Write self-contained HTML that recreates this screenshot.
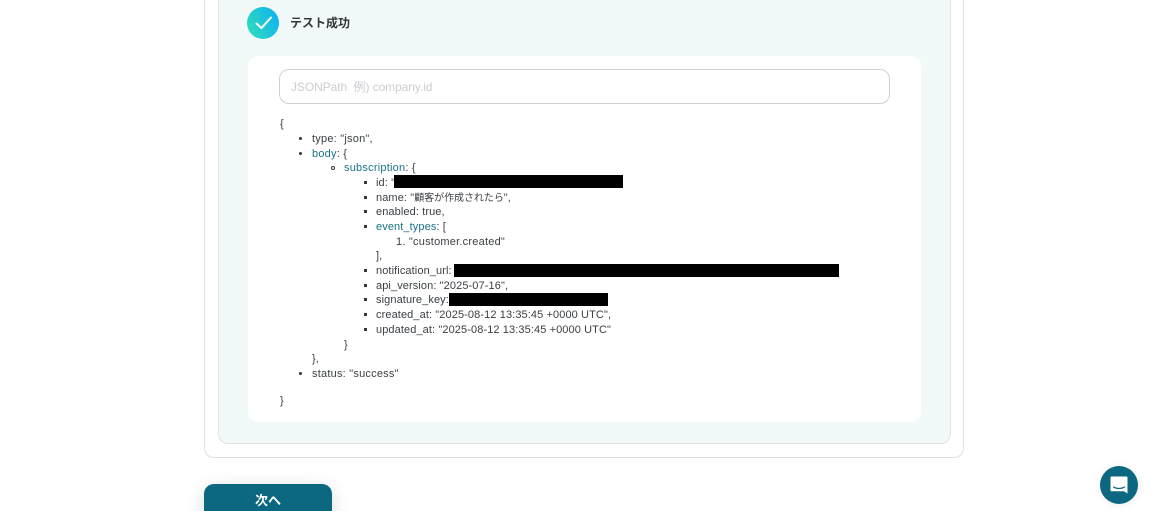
<!DOCTYPE html>
<html lang="ja"><head><meta charset="utf-8"><title>テスト成功</title>
<style>
html,body{margin:0;padding:0;width:1150px;height:511px;overflow:hidden;background:#fff}
body{position:relative;font-family:"Liberation Sans","Noto Sans CJK JP",sans-serif;color:#33383c}
.a{position:absolute;box-sizing:border-box}
.l{position:absolute;font-size:11px;line-height:14px;height:14px;white-space:pre;letter-spacing:.1px;color:#3a3f43}
.l b{font-weight:400;color:#1a7288}
.l i{font-style:normal;font-size:10px;letter-spacing:-.05px}
.w{letter-spacing:.22px}
.r{position:absolute;background:#000}
.d{position:absolute;background:#33383c}
</style></head><body>
<div class="a" style="left:204px;top:-20px;width:760px;height:478px;border:1px solid #dfe0e4;border-radius:10px"></div>
<div class="a" style="left:218px;top:-20px;width:733px;height:464px;background:#f2faf9;border:1px solid #dfe3e5;border-radius:10px"></div>
<svg class="a" style="left:247px;top:7px" width="32" height="32" viewBox="0 0 32 32"><defs><linearGradient id="g" x1="0" y1=".75" x2="1" y2=".25"><stop offset="0" stop-color="#2fdcbc"/><stop offset="1" stop-color="#0fb2f0"/></linearGradient></defs><circle cx="16" cy="16" r="16" fill="url(#g)"/><path d="M9.5 16.5l5 4.6L24 10.5" fill="none" stroke="#fff" stroke-width="2" stroke-linecap="round" stroke-linejoin="round"/></svg>
<div class="a" style="left:290px;top:14px;font-size:12px;line-height:18px;font-weight:700;color:#33383c;white-space:pre">テスト成功</div>
<div class="a" style="left:248px;top:56px;width:673px;height:366px;background:#fff;border-radius:10px"></div>
<div class="a" style="left:279px;top:69px;width:611px;height:35px;border:1px solid #cfd1d6;border-radius:10px;background:#fff"></div>
<div class="a" style="left:291px;top:79px;font-size:12px;line-height:16px;color:#cbcdd1;white-space:pre;letter-spacing:-.08px">JSONPath  例) company.id</div>

<div class="l" style="left:280px;top:117px">{</div>
<div class="d" style="left:299px;top:137px;width:3px;height:3px;border-radius:50%"></div>
<div class="l w" style="left:312px;top:132px">type: "json",</div>
<div class="d" style="left:299px;top:152px;width:3px;height:3px;border-radius:50%"></div>
<div class="l w" style="left:312px;top:147px"><b>body</b>: {</div>
<div class="a" style="left:331px;top:166px;width:4px;height:4px;border-radius:50%;border:1px solid #33383c"></div>
<div class="l w" style="left:344px;top:161px"><b>subscription</b>: {</div>
<div class="d" style="left:364px;top:181px;width:3px;height:3px"></div>
<div class="l" style="left:376px;top:176px">id: "</div>
<div class="r" style="left:394px;top:175px;width:229px;height:13px"></div>
<div class="d" style="left:364px;top:196px;width:3px;height:3px"></div>
<div class="l" style="left:376px;top:191px">name: "<i>顧客が作成されたら</i>",</div>
<div class="d" style="left:364px;top:210px;width:3px;height:3px"></div>
<div class="l" style="left:376px;top:205px">enabled: true,</div>
<div class="d" style="left:364px;top:225px;width:3px;height:3px"></div>
<div class="l" style="left:376px;top:220px"><b>event_types</b>: [</div>
<div class="l w" style="left:396px;top:235px">1. "customer.created"</div>
<div class="l" style="left:376px;top:249px">],</div>
<div class="d" style="left:364px;top:269px;width:3px;height:3px"></div>
<div class="l" style="left:376px;top:264px">notification_url:</div>
<div class="r" style="left:454px;top:264px;width:385px;height:13px"></div>
<div class="d" style="left:364px;top:284px;width:3px;height:3px"></div>
<div class="l" style="left:376px;top:279px">api_version: "2025-07-16",</div>
<div class="d" style="left:364px;top:298px;width:3px;height:3px"></div>
<div class="l" style="left:376px;top:293px">signature_key:</div>
<div class="r" style="left:449px;top:293px;width:159px;height:13px"></div>
<div class="d" style="left:364px;top:313px;width:3px;height:3px"></div>
<div class="l" style="left:376px;top:308px">created_at: "2025-08-12 13:35:45 +0000 UTC",</div>
<div class="d" style="left:364px;top:328px;width:3px;height:3px"></div>
<div class="l" style="left:376px;top:323px">updated_at: "2025-08-12 13:35:45 +0000 UTC"</div>
<div class="l" style="left:344px;top:338px">}</div>
<div class="l" style="left:312px;top:352px">},</div>
<div class="d" style="left:299px;top:372px;width:3px;height:3px;border-radius:50%"></div>
<div class="l w" style="left:312px;top:367px">status: "success"</div>
<div class="l" style="left:280px;top:394px">}</div>

<div class="a" style="left:204px;top:484px;width:128px;height:50px;background:#0b6880;border-radius:10px;box-shadow:0 4px 16px rgba(40,50,60,.18);color:#fff;font-size:13px;font-weight:700;line-height:33px;text-align:center">次へ</div>
<div class="a" style="left:1100px;top:466px;width:38px;height:38px;border-radius:50%;background:#0b6880;box-shadow:0 1px 8px rgba(0,0,0,.08)"></div>
<svg class="a" style="left:1109px;top:475px" width="20" height="20" viewBox="0 0 20 20"><path d="M2.5 1.5h15a1 1 0 0 1 1 1v16l-3.5-2.2H2.5a1 1 0 0 1-1-1V2.5a1 1 0 0 1 1-1z" fill="#fff"/><path d="M4.5 12c3.2 2 7.8 2 11 0" fill="none" stroke="#0b6880" stroke-width="1.2" stroke-linecap="round"/></svg>
</body></html>
